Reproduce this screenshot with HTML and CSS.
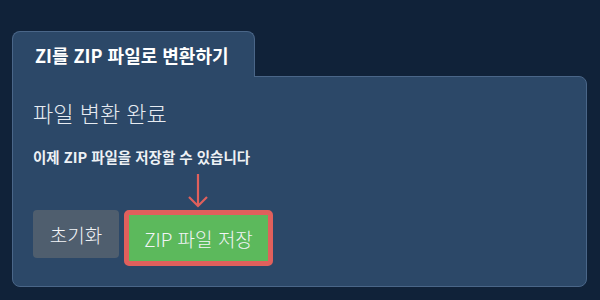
FILE: index.html
```html
<!DOCTYPE html>
<html lang="ko">
<head>
    <meta charset="UTF-8">
    <meta name="viewport" content="width=device-width, initial-scale=1.0">
    <title>ZIP 변환</title>
    <link rel="stylesheet" href="styles.css">
</head>
<body>
    <div class="wrap">
        <div class="tab">ZI를 ZIP 파일로 변환하기</div>
        <div class="panel">
            <h2 class="title">파일 변환 완료</h2>
            <p class="note">이제 ZIP 파일을 저장할 수 있습니다</p>
            <div class="actions">
                <button class="btn reset">초기화</button>
                <div class="save-box">
                    <svg class="arrow" width="24" height="36" viewBox="0 0 24 36">
                        <path d="M12 1 V33 M3 24 L12 33 L21 24" fill="none" stroke="#e0605c" stroke-width="2.2"/>
                    </svg>
                    <button class="btn save">ZIP 파일 저장</button>
                </div>
            </div>
        </div>
    </div>
</body>
</html>
```

FILE: styles.css
```css
body {
    margin: 0;
    background-color: rgb(16, 34, 57);
    font-family: "Noto Sans CJK KR", "Noto Sans", sans-serif;
    color: #fff;
}

.wrap {
    padding: 31px 13px 0 12px;
}

.tab {
    box-sizing: border-box;
    width: 243px;
    height: 46px;
    padding-left: 22px;
    line-height: 46px;
    font-size: 18px;
    font-weight: bold;
    background-color: rgb(44, 72, 104);
    border: 1px solid rgb(74, 102, 136);
    border-bottom: none;
    border-radius: 8px 8px 0 0;
    position: relative;
    z-index: 1;
    margin-bottom: -1px;
}

.panel {
    box-sizing: border-box;
    height: 211px;
    padding: 16px 20px 0 20px;
    background-color: rgb(44, 72, 104);
    border: 1px solid rgb(74, 102, 136);
    border-radius: 0 8px 8px 8px;
}

.title {
    margin: 0;
    font-size: 22px;
    font-weight: 300;
    line-height: 38px;
    color: #e6ebf1;
}

.note {
    margin: 16px 0 0 0;
    font-size: 14.5px;
    font-weight: bold;
    line-height: 20px;
    color: #eef1f5;
}

.actions {
    display: flex;
    align-items: flex-start;
    gap: 5px;
    margin-top: 43px;
}

.btn {
    font-family: inherit;
    font-size: 19px;
    font-weight: 300;
    color: #f2f4f7;
    border: none;
    border-radius: 4px;
    cursor: pointer;
}

.reset {
    width: 86px;
    height: 48px;
    padding: 0;
    background-color: rgb(79, 94, 110);
}

.save-box {
    position: relative;
}

.save {
    box-sizing: border-box;
    width: 149px;
    height: 56px;
    background-color: rgb(92, 185, 92);
    border: 5px solid rgb(224, 96, 92);
    border-radius: 5px;
    padding: 0;
}

.arrow {
    position: absolute;
    left: 62px;
    top: -37px;
}
```
